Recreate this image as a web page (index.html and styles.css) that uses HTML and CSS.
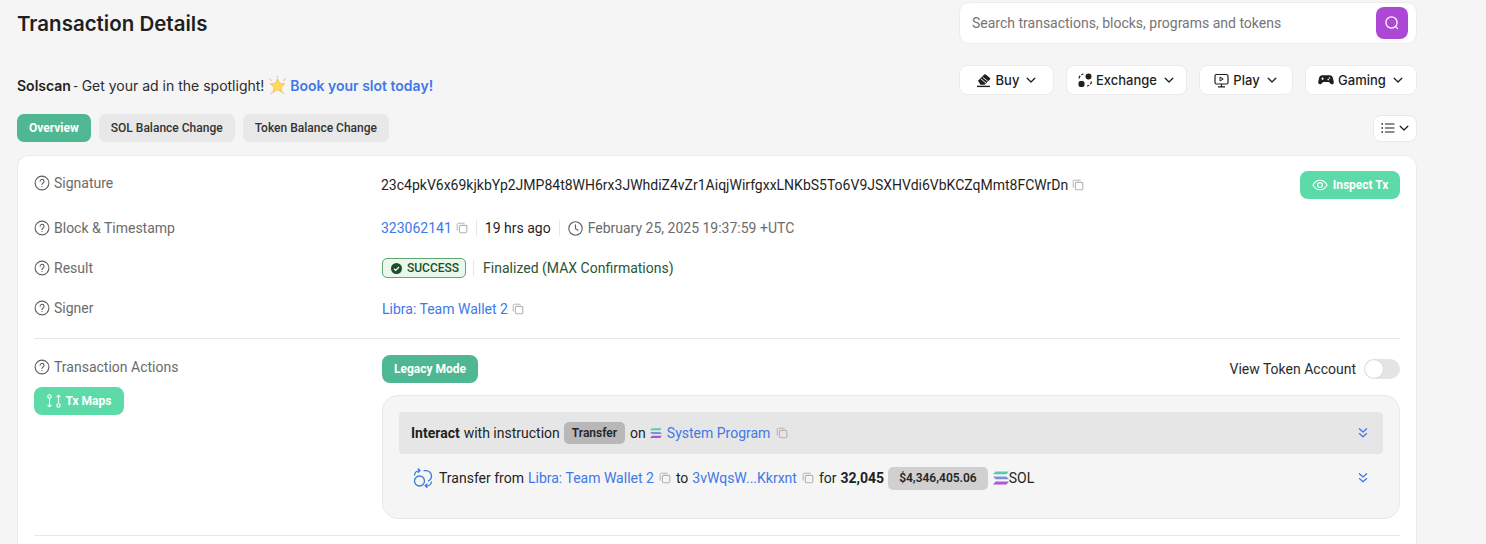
FILE: index.html
```html
<!DOCTYPE html>
<html lang="en">
<head>
<meta charset="utf-8">
<title>Transaction Details</title>
<link rel="stylesheet" href="styles.css">
</head>
<body>
<svg class="defs" width="0" height="0" aria-hidden="true">
  <defs>
    <symbol id="q" viewBox="0 0 16 16"><circle cx="8" cy="8" r="6.900" fill="none" stroke="currentColor" stroke-width="1.100"/><path d="M6.100 6.300a1.950 1.950 0 1 1 3 1.650c-.7.450-1.100.850-1.100 1.600" fill="none" stroke="currentColor" stroke-width="1.100" stroke-linecap="round"/><circle cx="8" cy="11.600" r=".7" fill="currentColor"/></symbol>
    <symbol id="copy" viewBox="0 0 12 12"><path d="M1.200 8.600V2.400c0-.7.500-1.200 1.200-1.200h6.200" fill="none" stroke="currentColor" stroke-width="1"/><rect x="3.400" y="3.400" width="7.400" height="7.400" rx="1.200" fill="none" stroke="currentColor" stroke-width="1.100"/></symbol>
    <symbol id="chev" viewBox="0 0 12 12"><path d="M2.200 4.200 6 8l3.800-3.800" fill="none" stroke="currentColor" stroke-width="1.300" stroke-linecap="round" stroke-linejoin="round"/></symbol>
    <symbol id="dbl" viewBox="0 0 12 12"><path d="M2.400 1.800 6 5l3.600-3.200M2.400 6.600 6 9.800l3.600-3.200" fill="none" stroke="currentColor" stroke-width="1.300" stroke-linecap="round" stroke-linejoin="round"/></symbol>
    <linearGradient id="solg" x1="0" y1="0" x2="0" y2="1"><stop offset="0" stop-color="#4fd8ab"/><stop offset=".5" stop-color="#7f8fd8"/><stop offset="1" stop-color="#b44ae0"/></linearGradient>
    <symbol id="sol" viewBox="0 0 16 13"><path d="M2.600 0H16l-2.600 2.800H0zM0 5h13.400L16 7.800H2.600zM2.600 10H16l-2.600 3H0z" fill="url(#solg)"/></symbol>
  </defs>
</svg>
<div class="page">
  <header class="top">
    <h1 class="title">Transaction Details</h1>
    <div class="search">
      <span class="search-text">Search transactions, blocks, programs and tokens</span>
      <span class="search-btn"><svg width="16" height="16" viewBox="0 0 16 16"><circle cx="7.500" cy="7.500" r="5.600" fill="none" stroke="#fff" stroke-width="1.300"/><path d="m11.600 11.600 2 2" stroke="#fff" stroke-width="1.300" stroke-linecap="round"/></svg></span>
    </div>
  </header>
  <div class="promo-row">
    <p class="promo"><b>Solscan</b> <span class="dash">-</span> Get your ad in the spotlight! <svg class="star" width="19" height="19" viewBox="0 0 18 18"><path d="M9 2.600l2 4.200 5 .6-3.600 3.300.9 4.900L9 13l-4.300 2.600.9-4.900L2 7.400l5-.6z" fill="#ffd95c" stroke="#f3b63c" stroke-width=".6"/><path d="M1.500 2.500l2 2.200M16.500 2.500l-2 2.200M9 0v2M2.500 17l2-1.500M15.500 17l-2-1.500" stroke="#f0c98a" stroke-width="1.100"/></svg> <a class="promo-link">Book your slot today!</a></p>
    <nav class="menus">
      <button class="menu m-buy"><svg width="16" height="15" viewBox="0 0 16 15"><path d="M2 7.800 8.300 1.500a1 1 0 0 1 1.400 0l4.300 3.600a1 1 0 0 1 0 1.400L8.500 11.800H4.500z" fill="#1f1f1f"/><path d="M1 13.400h13" stroke="#1f1f1f" stroke-width="1.400"/><path d="M5 6 10 10M6.800 4.300l5 4" stroke="#fff" stroke-width=".9"/></svg>Buy<svg class="chev"><use href="#chev"/></svg></button>
      <button class="menu m-ex"><svg width="14" height="14" viewBox="0 0 14 14"><circle cx="10.500" cy="3.500" r="3" fill="#1f1f1f"/><rect x=".5" y="8" width="6" height="6" rx="2" fill="#1f1f1f"/><path d="M1 5.500A5 5 0 0 1 5.500 1M13.500 8.500A5 5 0 0 1 9 13" fill="none" stroke="#1f1f1f" stroke-width="1.200" stroke-dasharray="3 1.500"/></svg>Exchange<svg class="chev"><use href="#chev"/></svg></button>
      <button class="menu m-play"><svg width="15" height="15" viewBox="0 0 15 15"><rect x="1" y="1.500" width="13" height="9.500" rx="1.500" fill="none" stroke="#1f1f1f" stroke-width="1.200"/><path d="M6 4v4l3.200-2z" fill="none" stroke="#1f1f1f" stroke-width="1"/><path d="M7.500 11v2.500M4 13.800h7" stroke="#1f1f1f" stroke-width="1.200"/></svg>Play<svg class="chev"><use href="#chev"/></svg></button>
      <button class="menu m-game"><svg width="16" height="14" viewBox="0 0 16 14"><path d="M4.200 2.200h7.600c1.700 0 2.700 1 3.100 2.700l.9 4.200c.3 1.700-1.500 2.900-2.900 1.800L10.800 9H5.200L3.100 10.900C1.700 12 0 10.800.2 9.100l.9-4.200c.4-1.700 1.400-2.700 3.100-2.700z" fill="#1f1f1f"/><path d="M3.300 5.700h2.600M4.600 4.400V7" stroke="#fff" stroke-width=".9"/><circle cx="11.500" cy="5" r=".8" fill="#fff"/><circle cx="10.200" cy="6.600" r=".8" fill="#fff"/></svg>Gaming<svg class="chev"><use href="#chev"/></svg></button>
    </nav>
  </div>
  <div class="tabs-row">
    <div class="tabs">
      <span class="tab active">Overview</span>
      <span class="tab">SOL Balance Change</span>
      <span class="tab">Token Balance Change</span>
    </div>
    <button class="list-btn"><svg width="14" height="12" viewBox="0 0 14 12"><path d="M4 2h9.500M4 6h9.500M4 10h9.500" stroke="#1f1f1f" stroke-width="1.100"/><path d="M.5 2h1.500M.5 6h1.500M.5 10h1.500" stroke="#1f1f1f" stroke-width="1.300"/></svg><svg class="chev"><use href="#chev"/></svg></button>
  </div>
  <main class="card">
    <section class="row row-sig">
      <div class="label"><svg class="q"><use href="#q"/></svg>Signature</div>
      <div class="value sig"><span>23c4pkV6x69kjkbYp2JMP84t8WH6rx3JWhdiZ4vZr1AiqjWirfgxxLNKbS5To6V9JSXHVdi6VbKCZqMmt8FCWrDn</span><svg class="copy"><use href="#copy"/></svg></div>
      <span class="mint-btn inspect"><svg width="16" height="12" viewBox="0 0 16 12"><path d="M1 6c1.700-3.200 4-4.800 7-4.800s5.300 1.600 7 4.800c-1.700 3.200-4 4.800-7 4.800S2.700 9.200 1 6z" fill="none" stroke="#fff" stroke-width="1.100"/><circle cx="8" cy="6" r="2.400" fill="none" stroke="#fff" stroke-width="1.100"/></svg>Inspect Tx</span>
    </section>
    <section class="row row-block">
      <div class="label"><svg class="q"><use href="#q"/></svg>Block &amp; Timestamp</div>
      <div class="value"><a class="link">323062141</a><svg class="copy"><use href="#copy"/></svg><i class="sep"></i><span>19 hrs ago</span><i class="sep"></i><svg class="clock" width="15" height="15" viewBox="0 0 15 15"><circle cx="7.500" cy="7.500" r="6.700" fill="none" stroke="#5f5f5f" stroke-width="1.100"/><path d="M7.500 3.700v4l2.600 1.500" fill="none" stroke="#5f5f5f" stroke-width="1.100" stroke-linecap="round"/></svg><span class="muted">February 25, 2025 19:37:59 +UTC</span></div>
    </section>
    <section class="row row-result">
      <div class="label"><svg class="q"><use href="#q"/></svg>Result</div>
      <div class="value"><span class="success"><svg width="11" height="11" viewBox="0 0 11 11"><circle cx="5.500" cy="5.500" r="5.500" fill="#1f4d2c"/><path d="m3 5.700 1.700 1.600L8 4" fill="none" stroke="#fff" stroke-width="1.200"/></svg>SUCCESS</span><i class="sep sep-result"></i><span class="final">Finalized (MAX Confirmations)</span></div>
    </section>
    <section class="row row-signer">
      <div class="label"><svg class="q"><use href="#q"/></svg>Signer</div>
      <div class="value signer"><a class="link">Libra: Team Wallet 2</a><svg class="copy"><use href="#copy"/></svg></div>
    </section>
    <hr class="rule">
    <section class="actions">
      <div class="actions-side">
        <div class="label"><svg class="q"><use href="#q"/></svg>Transaction Actions</div>
        <span class="mint-btn maps"><svg width="14" height="14" viewBox="0 0 14 14"><g fill="none" stroke="#fff" stroke-width="1.100"><circle cx="2.500" cy="2.500" r="1.700"/><circle cx="11.500" cy="11.500" r="1.700"/><path d="M2.500 5v8M.6 10.800l1.900 2 1.900-2M11.500 9V1M9.600 3.200l1.900-2 1.900 2"/></g></svg>Tx Maps</span>
      </div>
      <div class="actions-main">
        <div class="actions-head">
          <span class="legacy">Legacy Mode</span>
          <div class="toggle-wrap">View Token Account<span class="toggle"><span class="knob"></span></span></div>
        </div>
        <div class="panel">
          <div class="ins-head">
            <b>Interact</b><span>with instruction</span><span class="tag">Transfer</span><span>on</span><svg class="sol-s"><use href="#sol"/></svg><a class="link">System Program</a><svg class="copy"><use href="#copy"/></svg>
            <svg class="dbl"><use href="#dbl"/></svg>
          </div>
          <div class="ins-body">
            <svg class="swap" width="20" height="20" viewBox="0 0 20 20"><g fill="none" stroke="#3f78d8" stroke-width="1.300"><circle cx="6.500" cy="13" r="5"/><path d="M10.500 2.600h2.500a5.500 5.500 0 0 1 5.500 5.500 5.500 5.500 0 0 1-3.500 5M1.500 7.500A5 5 0 0 1 6.500 2.600M4.800.5 7 2.600 4.800 4.800M18.500 13.500a4.500 4.500 0 0 1-4.500 4.300h-1.500M14.300 15.600 12.200 17.800l2.100 2"/></g></svg>
            <span>Transfer from</span><a class="link">Libra: Team Wallet 2</a><svg class="copy"><use href="#copy"/></svg><span>to</span><a class="link">3vWqsW...Kkrxnt</a><svg class="copy"><use href="#copy"/></svg><span>for</span><b>32,045</b><span class="tag usd">$4,346,405.06</span><span class="sol-token"><svg class="sol-b"><use href="#sol"/></svg>SOL</span>
            <svg class="dbl"><use href="#dbl"/></svg>
          </div>
        </div>
      </div>
    </section>
    <hr class="rule rule-end">
  </main>
</div>
</body>
</html>
```
FILE: styles.css
```css
* { box-sizing: border-box; }
html, body { margin: 0; height: 544px; overflow: hidden; }
body { background: #f5f5f5; color: #1f1f1f; font-family: Roboto, "Liberation Sans", sans-serif; font-size: 14px; }
.defs { position: absolute; }
svg { display: block; flex: none; }
.page { width: 1400px; margin-left: 17px; }

.top { display: flex; justify-content: space-between; align-items: flex-start; height: 65px; padding-top: 2px; }
.title { margin: 8px 0 0; font-family: Inter, sans-serif; font-size: 20.500px; line-height: 28px; font-weight: 600; color: #1f1f1f; }
.search { width: 458px; height: 42px; background: #fff; border: 1px solid #ececec; border-radius: 10px; display: flex; align-items: center; justify-content: space-between; padding: 0 8px 0 12px; }
.search-text { font-size: 14px; color: #757575; }
.search-btn { width: 32px; height: 32px; border-radius: 8px; background: #ad48d6; display: flex; align-items: center; justify-content: center; }

.promo-row { display: flex; justify-content: space-between; align-items: center; height: 30px; }
.promo { margin: 0; padding-top: 10px; font-family: Inter, sans-serif; font-size: 14px; color: #2b2b2b; white-space: nowrap; }
.promo b { font-weight: 600; color: #1f1f1f; margin-right: -1px; }
.dash { font-family: Roboto, sans-serif; }
.star { display: inline-block; vertical-align: -4px; margin: 0 -1px 0 0; }
.promo-link { color: #3f78e8; font-weight: 600; }
.menus { display: flex; gap: 12px; }
.menu { height: 30px; background: #fff; border: 1px solid #ececec; border-radius: 8px; display: flex; align-items: center; justify-content: center; gap: 4px; font: 500 13px Inter, sans-serif; color: #1f1f1f; padding: 0; }
.m-buy { width: 95px; }
.m-ex { width: 121px; }
.m-play { width: 94px; }
.m-game { width: 112px; }
.chev { width: 12px; height: 12px; color: #1f1f1f; margin-left: 2px; }

.tabs-row { display: flex; justify-content: space-between; align-items: center; height: 28px; margin-top: 19px; }
.tabs { display: flex; gap: 8px; }
.tab { height: 28px; padding: 0 12px; border-radius: 7px; background: #e8e8e8; display: flex; align-items: center; font-size: 12px; font-weight: 500; color: #333; }
.tab.active { background: #4fb893; color: #fff; font-weight: 700; }
.list-btn { width: 44px; height: 27px; background: #fff; border: 1px solid #e8e8e8; border-radius: 8px; display: flex; align-items: center; justify-content: center; gap: 1px; padding: 0; }

.card { margin-top: 13px; background: #fff; border: 1px solid #ececec; border-radius: 12px; padding: 0 16px; height: 420px; }
.row { display: flex; align-items: center; position: relative; }
.label { width: 347px; flex: none; display: flex; align-items: center; gap: 4px; color: #6b6b6b; font-size: 14px; font-weight: 400; }
.q { width: 16px; height: 16px; color: #5f5f5f; }
.value { display: flex; align-items: center; font-size: 14px; min-width: 0; white-space: nowrap; }
.row-sig { height: 55px; }
.row-sig .label { margin-top: -1px; }
.row-sig .value { margin-top: 3px; }
.row-block { height: 34px; }
.row-result { height: 46px; }
.row-signer { height: 34px; }
.copy { width: 12px; height: 12px; color: #b3b3b3; margin-left: 4px; }
.link { color: #3f78e8; }
.muted { color: #6b6b6b; }
.sep { width: 1px; height: 16px; background: #e6e6e6; margin: 0 8px; }
.clock { margin-right: 5px; }
.success { height: 20px; margin-left: 1px; padding: 0 6px 0 8px; display: flex; align-items: center; gap: 5px; border: 1px solid #5da86f; border-radius: 5px; background: #e9f8ea; color: #1f4d2c; font-size: 12px; font-weight: 500; }
.sep-result { margin: 0 9px 0 7px; }
.final { color: #2b5534; }
.signer { padding: 2px 0 0 1px; }
.mint-btn { background: #5cdaa8; color: #fff; font-size: 12px; font-weight: 700; display: flex; align-items: center; border-radius: 8px; height: 28px; }
.inspect { position: absolute; right: 0; top: 15px; width: 100px; justify-content: center; gap: 5px; }
.rule { margin: 13px 0 0; border: 0; border-top: 1px solid #e6e6e6; }
.rule-end { margin-top: 16px; }

.actions { display: flex; padding-top: 16px; }
.actions-side { width: 347px; flex: none; }
.actions-side .label { margin-top: 4px; }
.maps { width: 90px; justify-content: center; gap: 5px; margin-top: 12px; }
.actions-main { flex: 1; }
.actions-head { display: flex; justify-content: space-between; align-items: center; height: 28px; }
.legacy { height: 28px; padding: 0 12px; background: #4fb893; color: #fff; border-radius: 8px; display: flex; align-items: center; font-size: 12px; font-weight: 700; margin-left: 1px; }
.toggle-wrap { display: flex; align-items: center; gap: 8px; font-size: 14px; color: #2b2b2b; }
.toggle { width: 36px; height: 20px; border-radius: 10px; background: #e5e5e5; display: flex; align-items: center; padding: 1px; }
.knob { width: 18px; height: 18px; border-radius: 50%; background: #fff; box-shadow: 0 0 2px rgba(0,0,0,.15); }
.panel { margin: 12px 0 0 1px; height: 124px; background: #f5f5f5; border: 1px solid #e8e8e8; border-radius: 16px; padding: 16px 16px 0; }
.ins-head { height: 42px; background: #e6e6e6; border-radius: 4px; padding: 0 12px; display: flex; align-items: center; gap: 4px; }
.ins-head b { font-weight: 700; }
.ins-head .link { margin-left: 1px; }
.ins-head .copy { margin-left: 2px; }
.tag { height: 22px; padding: 0 8px; background: #b8b8b8; border-radius: 5px; display: flex; align-items: center; font-size: 12px; font-weight: 600; color: #262626; margin: 0 1px 0 0; }
.sol-s { width: 12px; height: 10px; }
.dbl { width: 12px; height: 12px; color: #3f78e8; margin-left: auto; margin-right: 2px; }
.ins-body { display: flex; align-items: center; gap: 4px; height: 48px; padding: 0 12px 0 14px; }
.ins-body .copy { margin: 0 1px; }
.swap { margin-right: 2px; }
.ins-body b { font-weight: 700; }
.usd { background: #d0d0d0; padding: 0 11px; height: 23px; margin: 0; }
.sol-token { display: flex; align-items: center; margin-left: 1px; }
.sol-b { width: 16px; height: 14px; }
```
